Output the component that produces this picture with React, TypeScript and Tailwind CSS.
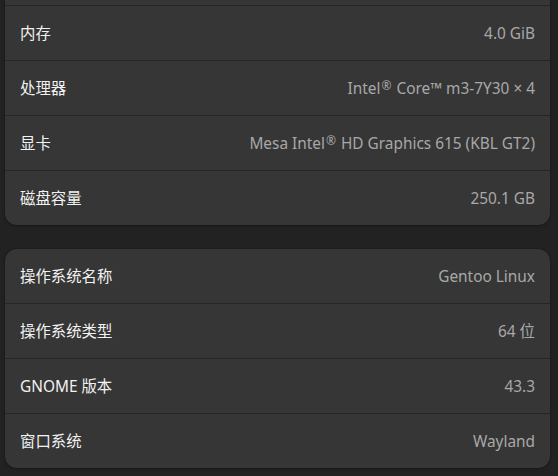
import React from 'react'

const hardware = [
  { label: '', value: '' },
  { label: '内存', value: '4.0 GiB' },
  { label: '处理器', value: 'Intel® Core™ m3-7Y30 × 4' },
  { label: '显卡', value: 'Mesa Intel® HD Graphics 615 (KBL GT2)' },
  { label: '磁盘容量', value: '250.1 GB' },
]

const software = [
  { label: '操作系统名称', value: 'Gentoo Linux' },
  { label: '操作系统类型', value: '64 位' },
  { label: 'GNOME 版本', value: '43.3' },
  { label: '窗口系统', value: 'Wayland' },
]

// the font in the screenshot draws ® small and raised
function Value({ text }: { text: string }) {
  const parts = text.split('®')
  return (
    <span className="text-[#a8a8a8]">
      {parts.map((p, i) => (
        <React.Fragment key={i}>
          {i > 0 && <span className="relative -top-[4px] px-[1px] text-[12px] leading-none">®</span>}
          {p}
        </React.Fragment>
      ))}
    </span>
  )
}

function InfoGroup({ rows }: { rows: { label: string; value: string }[] }) {
  return (
    <div className="rounded-xl bg-[#363636] shadow-[0_0_0_1px_rgba(0,0,0,0.08),0_1px_3px_rgba(0,0,0,0.25)] overflow-hidden">
      {rows.map((row, i) => (
        <div
          key={i}
          className={
            'flex items-baseline justify-between px-[15px] pt-[17px] text-[15.4px] leading-[22px] ' +
            (i > 0 ? 'h-[55px] border-t border-[#262626]' : 'h-[54px]')
          }
        >
          <span className="text-[#f2f2f2]">{row.label}</span>
          <Value text={row.value} />
        </div>
      ))}
    </div>
  )
}

export default function App() {
  return (
    <div
      className="h-[476px] w-[558px] overflow-hidden bg-[#222222]"
      style={{ fontFamily: '"Noto Sans", "Noto Sans CJK SC", sans-serif' }}
    >
      <div className="mt-[-49px] flex flex-col gap-6 pl-[5px] pr-[8px]">
        <InfoGroup rows={hardware} />
        <InfoGroup rows={software} />
      </div>
    </div>
  )
}
